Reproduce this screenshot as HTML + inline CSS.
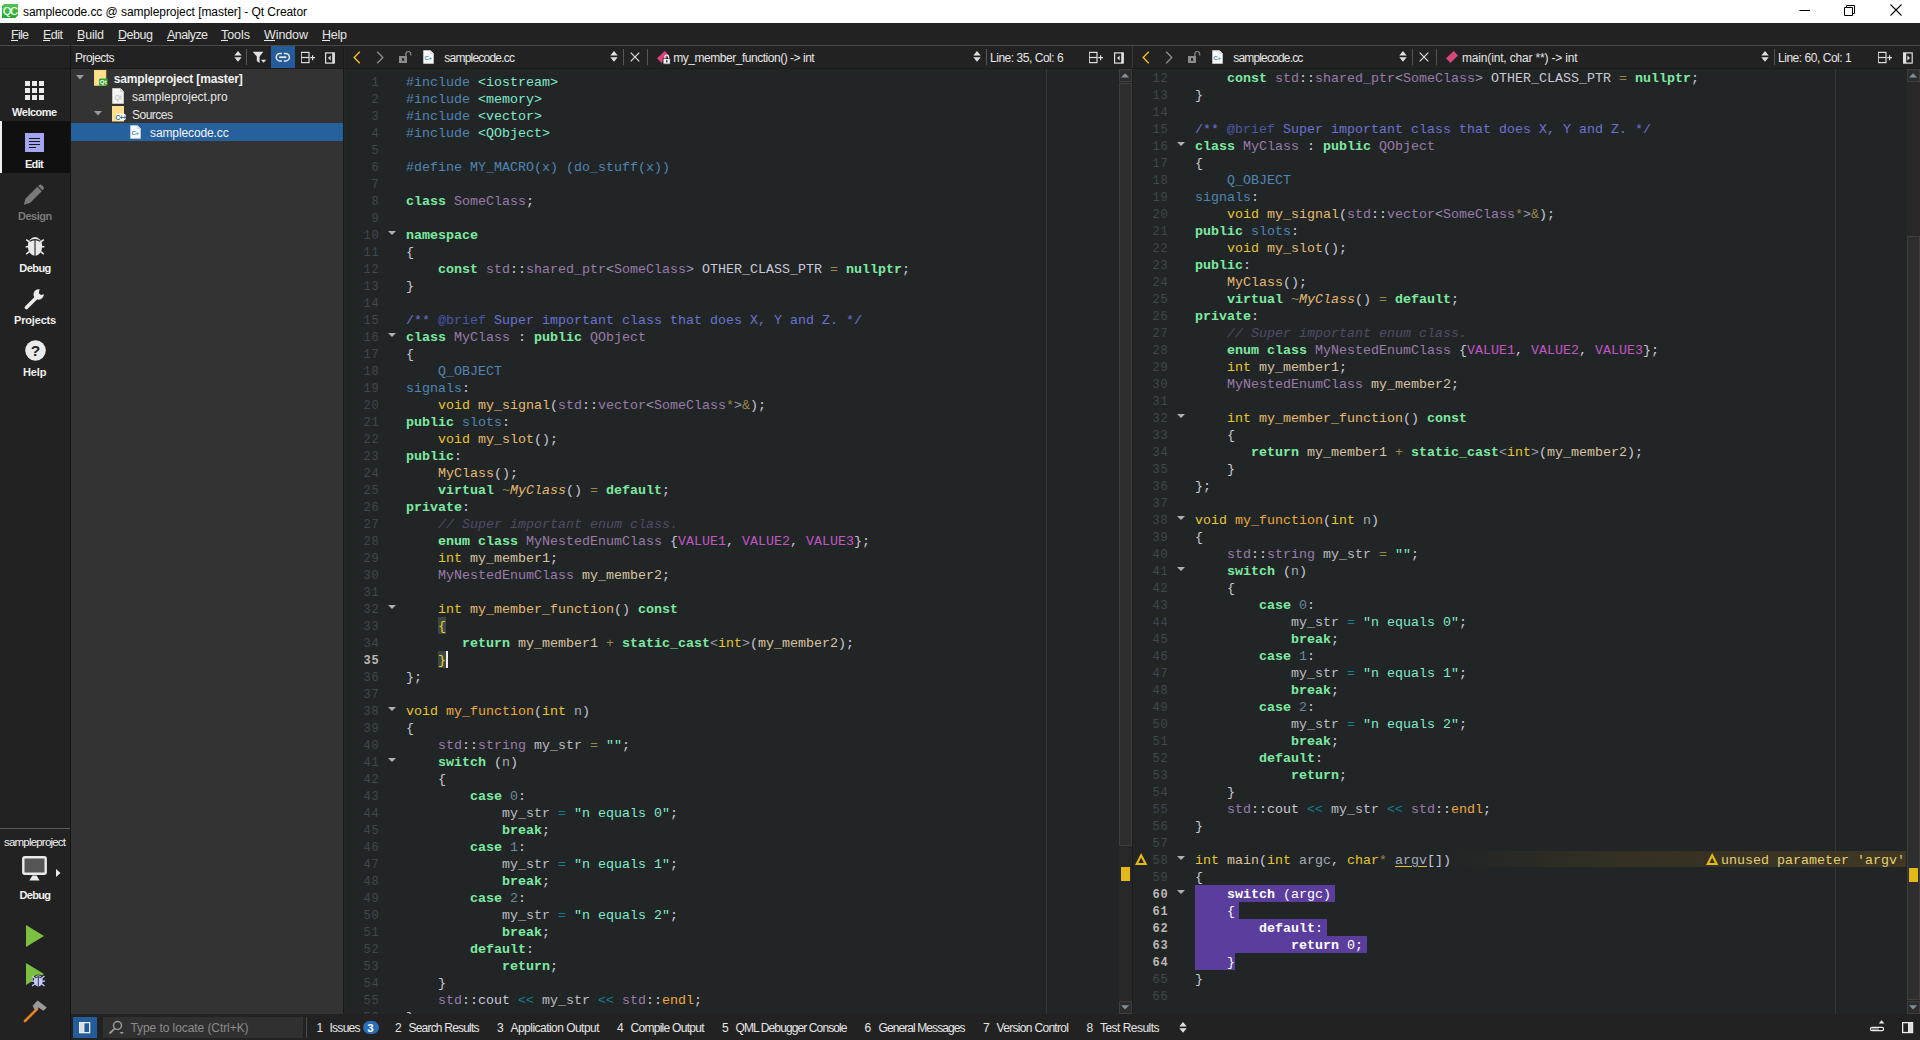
<!DOCTYPE html>
<html><head><meta charset="utf-8"><title>Qt Creator</title>
<style>
html,body{margin:0;padding:0;}
body{width:1920px;height:1040px;overflow:hidden;background:#222526;position:relative;font-family:"Liberation Sans",sans-serif;}
.b{position:absolute;display:block;}
.t{position:absolute;white-space:pre;line-height:16px;height:16px;font-family:"Liberation Sans",sans-serif;}
.ed{position:absolute;overflow:hidden;background:#222526;}
.ln{position:absolute;left:0;height:17px;line-height:17px;white-space:pre;font-family:"Liberation Mono",monospace;font-size:13.333px;color:#c9c9d9;}
.ln i.n{position:absolute;left:0;width:34.6px;top:2px;font-size:12px;letter-spacing:0.8px;text-align:right;font-style:normal;color:#3f484f;}
.ln i.n.cur{color:#bcb8b4;font-weight:bold;}
.ln b.cd{position:absolute;left:61px;top:1px;font-weight:normal;}
.fold{position:absolute;left:42.6px;top:5px;width:0;height:0;border-left:4px solid transparent;border-right:4px solid transparent;border-top:4.7px solid #b0b0b0;}

.p{color:#5086b4}.s{color:#80eacc}.k{color:#7deaa2;font-weight:bold}.ty{color:#9b7bab}
.y{color:#e6c52f}.o{color:#9a8848}.ab{color:#9c9cb0}.lv{color:#babec5}.c{color:#6b72d2}.ct{color:#4b56a6}
.lc{color:#4d4d66;font-style:italic}.e{color:#c257c4}.f{color:#e6ba72}.gf{color:#eda93a}
.m{color:#d9c3a2}.nu{color:#6888a0}.ov{color:#11808f}.pa{color:#a3acb8}.vf{color:#e6ba72;font-style:italic}
.mp{color:#e6d822}
.sel{color:#fff}.sel *{color:#fff !important}
.wu{color:#a3acbc;text-decoration:underline;text-decoration-color:#e0c030;text-underline-offset:2px}

</style></head><body>
<div class="b" style="left:0px;top:0px;width:1920px;height:23px;background:#ffffff;"></div>
<svg class="b" style="left:2px;top:4px;" width="17" height="15" viewBox="0 0 17 15"><defs><linearGradient id="qcg" x1="0" y1="0" x2="0" y2="1"><stop offset="0" stop-color="#52c658"/><stop offset="1" stop-color="#1fa62a"/></linearGradient></defs><path d="M2 0H16V11.4L13.2 14H0V2Z" fill="url(#qcg)"/><text x="8.1" y="11" font-family="Liberation Sans" font-size="10.5" fill="#f4fff4" text-anchor="middle" letter-spacing="-0.7" stroke="#f4fff4" stroke-width="0.25">QC</text></svg>
<span class="t" style="left:23px;top:4px;font-size:12px;color:#000;letter-spacing:-0.059px;">samplecode.cc @ sampleproject [master] - Qt Creator</span>
<svg class="b" style="left:1798.5px;top:4px;" width="12" height="12" viewBox="0 0 12 12"><path d="M0.5 6.5H11" stroke="#000" stroke-width="1"/></svg>
<svg class="b" style="left:1843px;top:3.5px;" width="13" height="13" viewBox="0 0 13 13"><path d="M1.5 3.5H9.5V11.5H1.5Z M3.5 3.5V1.5H11.5V9.5H9.5" fill="none" stroke="#000" stroke-width="1"/></svg>
<svg class="b" style="left:1889.5px;top:4.2px;" width="12" height="12" viewBox="0 0 12 12"><path d="M0.5 0.5L11.5 11.5M11.5 0.5L0.5 11.5" stroke="#000" stroke-width="1.1"/></svg>
<div class="b" style="left:0px;top:23px;width:1920px;height:22px;background:#222222;"></div>
<div class="b" style="left:0px;top:45px;width:1920px;height:1px;background:#4a4a4a;"></div>
<div class="b" style="left:70px;top:45px;width:1px;height:1px;background:#222222;"></div>
<span class="t" style="left:11px;top:27px;font-size:12.5px;color:#e6e6e6;letter-spacing:-0.714px;">File</span>
<div class="b" style="left:11px;top:40px;width:6.63477px;height:1px;background:#e6e6e6;"></div>
<span class="t" style="left:43px;top:27px;font-size:12.5px;color:#e6e6e6;letter-spacing:-0.513px;">Edit</span>
<div class="b" style="left:43px;top:40px;width:7.33789px;height:1px;background:#e6e6e6;"></div>
<span class="t" style="left:77px;top:27px;font-size:12.5px;color:#e6e6e6;letter-spacing:-0.199px;">Build</span>
<div class="b" style="left:77px;top:40px;width:7.33789px;height:1px;background:#e6e6e6;"></div>
<span class="t" style="left:118px;top:27px;font-size:12.5px;color:#e6e6e6;letter-spacing:-0.458px;">Debug</span>
<div class="b" style="left:118px;top:40px;width:8.02734px;height:1px;background:#e6e6e6;"></div>
<span class="t" style="left:167px;top:27px;font-size:12.5px;color:#e6e6e6;letter-spacing:-0.578px;">Analyze</span>
<div class="b" style="left:167px;top:40px;width:7.33789px;height:1px;background:#e6e6e6;"></div>
<span class="t" style="left:221px;top:27px;font-size:12.5px;color:#e6e6e6;letter-spacing:-0.045px;">Tools</span>
<div class="b" style="left:221px;top:40px;width:6.63477px;height:1px;background:#e6e6e6;"></div>
<span class="t" style="left:264px;top:27px;font-size:12.5px;color:#e6e6e6;letter-spacing:-0.091px;">Window</span>
<div class="b" style="left:264px;top:40px;width:10.7988px;height:1px;background:#e6e6e6;"></div>
<span class="t" style="left:322px;top:27px;font-size:12.5px;color:#e6e6e6;letter-spacing:-0.236px;">Help</span>
<div class="b" style="left:322px;top:40px;width:8.02734px;height:1px;background:#e6e6e6;"></div>
<div class="b" style="left:0px;top:46px;width:1920px;height:23px;background:#222222;"></div>
<div class="b" style="left:0px;top:46px;width:70px;height:22px;background:#222222;"></div>
<div class="b" style="left:0px;top:68px;width:1920px;height:1px;background:#1b1b1b;"></div>
<div class="b" style="left:70px;top:46px;width:1px;height:994px;background:#141414;"></div>
<div class="b" style="left:0px;top:69px;width:70px;height:971px;background:#222222;"></div>
<div class="b" style="left:0px;top:121px;width:70px;height:52px;background:#101010;"></div>
<div class="b" style="left:0px;top:121px;width:2px;height:52px;background:#f0f0f0;"></div>
<span class="t" style="left:12.1px;top:104px;font-size:11px;color:#f0f0f0;font-weight:bold;letter-spacing:-0.499px;">Welcome</span>
<span class="t" style="left:24.9px;top:156px;font-size:11px;color:#f0f0f0;font-weight:bold;letter-spacing:-0.626px;">Edit</span>
<span class="t" style="left:18px;top:208px;font-size:11px;color:#7a7a7a;font-weight:bold;letter-spacing:-0.474px;">Design</span>
<span class="t" style="left:19.3px;top:260px;font-size:11px;color:#f0f0f0;font-weight:bold;letter-spacing:-0.554px;">Debug</span>
<span class="t" style="left:14px;top:312px;font-size:11px;color:#f0f0f0;font-weight:bold;letter-spacing:-0.173px;">Projects</span>
<span class="t" style="left:22.9px;top:364px;font-size:11px;color:#f0f0f0;font-weight:bold;letter-spacing:-0.112px;">Help</span>
<svg class="b" style="left:24.7px;top:81.3px;" width="19" height="19" viewBox="0 0 19 19"><rect x="0" y="0" width="5" height="5" fill="#eaeaea"/><rect x="7" y="0" width="5" height="5" fill="#eaeaea"/><rect x="14" y="0" width="5" height="5" fill="#eaeaea"/><rect x="0" y="7" width="5" height="5" fill="#eaeaea"/><rect x="7" y="7" width="5" height="5" fill="#eaeaea"/><rect x="14" y="7" width="5" height="5" fill="#eaeaea"/><rect x="0" y="14" width="5" height="5" fill="#eaeaea"/><rect x="7" y="14" width="5" height="5" fill="#eaeaea"/><rect x="14" y="14" width="5" height="5" fill="#eaeaea"/></svg>
<svg class="b" style="left:25px;top:132.6px;" width="20" height="20" viewBox="0 0 20 20"><rect x="0" y="0" width="19" height="19" fill="#a3a5f0"/><path d="M4 5.5H15M4 8.5H15M4 11.5H15M4 14.5H11" stroke="#15151a" stroke-width="1"/></svg>
<svg class="b" style="left:23px;top:184px;" width="24" height="24" viewBox="0 0 24 24"><path d="M0.8 20.8L2.6 14.6L14.4 2.8L18.8 7.2L7 19Z" fill="#7a7a7a"/><path d="M15.2 2L17 0.6Q17.8 0.2 18.6 1L20.6 3Q21.4 3.8 20.8 4.6L19.6 6.4Z" fill="#7a7a7a"/></svg>
<svg class="b" style="left:24px;top:235px;" width="22" height="22" viewBox="0 0 22 22"><ellipse cx="11" cy="11.3" rx="7.2" ry="9.4" fill="#eaeaea"/><path d="M11 4.6V21" stroke="#212121" stroke-width="1.1"/><path d="M5.2 6.6Q11 2.6 16.8 6.6" fill="none" stroke="#212121" stroke-width="1.1"/><path d="M2.2 4.6L5.6 7.2M19.8 4.6L16.4 7.2M1.6 11.8H4.6M20.4 11.8H17.4M2.2 19.2L5.6 16.4M19.8 19.2L16.4 16.4" stroke="#eaeaea" stroke-width="1.5"/></svg>
<svg class="b" style="left:24px;top:288px;" width="22" height="22" viewBox="0 0 22 22"><path d="M2.5 19.5L12 10" stroke="#eaeaea" stroke-width="3.6" stroke-linecap="round"/><path d="M19.8 5.2A5.2 5.2 0 1 1 14.6 1.3L14.6 5.2L17.2 6.5Z" fill="#eaeaea" transform="rotate(12 15 6)"/></svg>
<svg class="b" style="left:24.5px;top:340px;" width="21" height="21" viewBox="0 0 21 21"><circle cx="10.5" cy="10.5" r="10.3" fill="#eaeaea"/><text x="10.5" y="16" text-anchor="middle" font-family="Liberation Sans" font-weight="bold" font-size="15.5" fill="#212121">?</text></svg>
<div class="b" style="left:0px;top:828px;width:70px;height:1px;background:#5a5a5a;"></div>
<span class="t" style="left:4px;top:833.5px;font-size:11.5px;color:#f0f0f0;letter-spacing:-0.799px;">sampleproject</span>
<svg class="b" style="left:22.3px;top:855.7px;" width="27" height="26" viewBox="0 0 27 26"><rect x="1.3" y="1.3" width="22.4" height="16.4" rx="1.5" fill="#555" stroke="#eaeaea" stroke-width="2.4"/><path d="M7.4 24.6L10.4 19.5H14.6L17.6 24.6Z" fill="#eaeaea"/></svg>
<svg class="b" style="left:56px;top:868px;" width="5" height="10" viewBox="0 0 5 10"><path d="M0 1L4.5 5L0 9Z" fill="#eaeaea"/></svg>
<span class="t" style="left:19.4px;top:886.5px;font-size:11px;color:#f0f0f0;font-weight:bold;letter-spacing:-0.654px;">Debug</span>
<svg class="b" style="left:25px;top:924px;" width="20" height="24" viewBox="0 0 20 24"><path d="M1 1L19 12L1 23Z" fill="#7bc043"/></svg>
<svg class="b" style="left:25px;top:962px;" width="22" height="25" viewBox="0 0 22 25"><path d="M1 1L19 12L1 23Z" fill="#7bc043"/><g transform="translate(6.3,11.3)"><ellipse cx="7" cy="7.6" rx="5.6" ry="6.5" fill="#212121"/><ellipse cx="7" cy="7.6" rx="4.5" ry="5.6" fill="#c5ccff"/><path d="M7 3.6V13" stroke="#212121" stroke-width="0.9"/><path d="M3.6 4.6Q7 2.2 10.4 4.6" fill="none" stroke="#212121" stroke-width="0.9"/><path d="M0.8 2.8L3.4 5M13.2 2.8L10.6 5M0.2 7.8H2.8M13.8 7.8H11.2M0.8 12.8L3.4 10.6M13.2 12.8L10.6 10.6" stroke="#c5ccff" stroke-width="1.3"/></g></svg>
<svg class="b" style="left:22px;top:1000px;" width="26" height="24" viewBox="0 0 26 24"><path d="M3 21L15 9" stroke="#e8821e" stroke-width="2.6" stroke-linecap="round"/><path d="M10.6 5.8L15.6 0.6L24.8 7.4L21.4 10.8L16.4 7.4L13.2 10.6Z" fill="#9a9a9a"/></svg>
<div class="b" style="left:71px;top:69px;width:272px;height:946px;background:#333333;"></div>
<div class="b" style="left:343px;top:46px;width:1px;height:969px;background:#1a1a1a;"></div>
<div class="b" style="left:344px;top:46px;width:1px;height:969px;background:#262626;"></div>
<span class="t" style="left:75px;top:50px;font-size:12px;color:#e6e6e6;letter-spacing:-0.550px;">Projects</span>
<svg class="b" style="left:233.5px;top:50.1px;" width="8" height="14" viewBox="0 0 8 14"><path d="M0.3 5.4L4 1L7.7 5.4Z M0.3 7.3L4 11.8L7.7 7.3Z" fill="#e0e0e0"/></svg>
<div class="b" style="left:246px;top:49px;width:1px;height:16px;background:#555;"></div>
<svg class="b" style="left:252px;top:51px;" width="16" height="14" viewBox="0 0 16 14"><path d="M0.8 0.8H11.3L7.6 5.6V12L4.8 10V5.6Z" fill="#e0e0e0"/><path d="M9 8.8H14.2L11.6 11.7Z" fill="#e0e0e0"/></svg>
<div class="b" style="left:271px;top:46px;width:24px;height:22px;background:#235c99;"></div>
<svg class="b" style="left:275px;top:51px;" width="16" height="12" viewBox="0 0 16 12"><path d="M6.9 2.5H5A3.7 3.7 0 0 0 5 9.9H6.9 M8.8 2.5H10.7A3.7 3.7 0 0 1 10.7 9.9H8.8" fill="none" stroke="#e8e8e8" stroke-width="1.5"/><path d="M4.2 6.2H11.4" stroke="#f0e8e4" stroke-width="1.8"/></svg>
<svg class="b" style="left:301px;top:51px;" width="16" height="13" viewBox="0 0 16 13"><rect x="0.2" y="1.4" width="7.8" height="10.2" fill="none" stroke="#e0e0e0" stroke-width="1.2"/><path d="M0.2 6.5H8" stroke="#e0e0e0" stroke-width="1.2"/><path d="M9.2 6.7H14M11.6 4.2V9.2" stroke="#e0e0e0" stroke-width="1.2"/></svg>
<svg class="b" style="left:324.5px;top:51.5px;" width="10" height="12" viewBox="0 0 10 12"><rect x="0.6" y="0.9" width="8.6" height="10.2" fill="none" stroke="#e0e0e0" stroke-width="1.2"/><rect x="7.2" y="0.9" width="2.4" height="10.2" fill="#e0e0e0"/><path d="M5.6 3.6V8.4L3 6Z" fill="#e0e0e0"/></svg>
<div class="b" style="left:71px;top:123px;width:272px;height:18px;background:#26609d;"></div>
<svg class="b" style="left:76px;top:75px;" width="8" height="5" viewBox="0 0 8 5"><path d="M0 0H8L4 4.5Z" fill="#9a9a9a"/></svg>
<svg class="b" style="left:94px;top:111px;" width="8" height="5" viewBox="0 0 8 5"><path d="M0 0H8L4 4.5Z" fill="#9a9a9a"/></svg>
<svg class="b" style="left:94px;top:70px;" width="14" height="16" viewBox="0 0 14 16"><rect x="0" y="0" width="12" height="15.5" fill="#fde08c"/><rect x="0" y="0" width="12" height="15.5" fill="none" stroke="#e8c860" stroke-width="0.6"/><rect x="5" y="8.5" width="8.6" height="7" rx="0.8" fill="#2fa52f"/><text x="9.3" y="14.2" font-family="Liberation Sans" font-weight="bold" font-size="6.2" fill="#fff" text-anchor="middle">Qt</text></svg>
<span class="t" style="left:113.7px;top:71px;font-size:12px;color:#f2f2f2;font-weight:bold;letter-spacing:-0.145px;">sampleproject [master]</span>
<svg class="b" style="left:112px;top:88px;" width="13" height="16" viewBox="0 0 13 16"><path d="M0.5 0.5H8.5L11.5 3.5V15.5H0.5Z" fill="#f4f4f4" stroke="#cfcfcf" stroke-width="0.8"/><path d="M8.5 0.5V3.5H11.5" fill="#dcdcdc" stroke="#bdbdbd" stroke-width="0.6"/><text x="6.3" y="11.5" font-family="Liberation Sans" font-size="6.5" fill="#b0b0b0" text-anchor="middle">Qt</text></svg>
<span class="t" style="left:132px;top:89px;font-size:12px;color:#e6e6e6;letter-spacing:0.020px;">sampleproject.pro</span>
<svg class="b" style="left:112px;top:106px;" width="14" height="16" viewBox="0 0 14 16"><rect x="0" y="0" width="12" height="15.5" fill="#fde08c"/><rect x="3.6" y="7.6" width="10.4" height="6.8" rx="3" fill="#fffdf4"/><text x="8.7" y="13.8" font-family="Liberation Sans" font-weight="bold" font-size="7" fill="#3c6fa5" text-anchor="middle" letter-spacing="-0.7">C++</text></svg>
<span class="t" style="left:132px;top:107px;font-size:12px;color:#e6e6e6;letter-spacing:-0.504px;">Sources</span>
<svg class="b" style="left:130.3px;top:125px;" width="11" height="14" viewBox="0 0 11 14"><path d="M0.5 0.5H7.5L10.5 3.5V13.5H0.5Z" fill="#f8f8f8" stroke="#d8d8d8" stroke-width="0.6"/><path d="M7.5 0.5V3.5H10.5" fill="#d8e0e8" stroke="#c0c8d0" stroke-width="0.5"/><text x="5" y="10.3" font-family="Liberation Sans" font-weight="bold" font-size="6" fill="#3c8fb8" text-anchor="middle" letter-spacing="-0.5">C+</text></svg>
<span class="t" style="left:150px;top:125px;font-size:12px;color:#f4f4f4;letter-spacing:-0.112px;">samplecode.cc</span>
<div class="ed" style="left:345px;top:69px;width:774px;height:945px;">
<div class="ln" style="top:4px"><i class="n">1</i><b class="cd"><span class="p">#include</span> <span class="s">&lt;iostream&gt;</span></b></div>
<div class="ln" style="top:21px"><i class="n">2</i><b class="cd"><span class="p">#include</span> <span class="s">&lt;memory&gt;</span></b></div>
<div class="ln" style="top:38px"><i class="n">3</i><b class="cd"><span class="p">#include</span> <span class="s">&lt;vector&gt;</span></b></div>
<div class="ln" style="top:55px"><i class="n">4</i><b class="cd"><span class="p">#include</span> <span class="s">&lt;QObject&gt;</span></b></div>
<div class="ln" style="top:72px"><i class="n">5</i><b class="cd"></b></div>
<div class="ln" style="top:89px"><i class="n">6</i><b class="cd"><span class="p">#define MY_MACRO(x) (do_stuff(x))</span></b></div>
<div class="ln" style="top:106px"><i class="n">7</i><b class="cd"></b></div>
<div class="ln" style="top:123px"><i class="n">8</i><b class="cd"><span class="k">class</span> <span class="ty">SomeClass</span>;</b></div>
<div class="ln" style="top:140px"><i class="n">9</i><b class="cd"></b></div>
<div class="ln" style="top:157px"><i class="n">10</i><u class="fold"></u><b class="cd"><span class="k">namespace</span></b></div>
<div class="ln" style="top:174px"><i class="n">11</i><b class="cd">{</b></div>
<div class="ln" style="top:191px"><i class="n">12</i><b class="cd">    <span class="k">const</span> <span class="ty">std</span>::<span class="ty">shared_ptr</span><span class="ab">&lt;</span><span class="ty">SomeClass</span><span class="ab">&gt;</span> OTHER_CLASS_PTR <span class="o">=</span> <span class="k">nullptr</span>;</b></div>
<div class="ln" style="top:208px"><i class="n">13</i><b class="cd">}</b></div>
<div class="ln" style="top:225px"><i class="n">14</i><b class="cd"></b></div>
<div class="ln" style="top:242px"><i class="n">15</i><b class="cd"><span class="c">/** </span><span class="ct">@brief</span><span class="c"> Super important class that does X, Y and Z. */</span></b></div>
<div class="ln" style="top:259px"><i class="n">16</i><u class="fold"></u><b class="cd"><span class="k">class</span> <span class="ty">MyClass</span> : <span class="k">public</span> <span class="ty">QObject</span></b></div>
<div class="ln" style="top:276px"><i class="n">17</i><b class="cd">{</b></div>
<div class="ln" style="top:293px"><i class="n">18</i><b class="cd">    <span class="p">Q_OBJECT</span></b></div>
<div class="ln" style="top:310px"><i class="n">19</i><b class="cd"><span class="p">signals</span>:</b></div>
<div class="ln" style="top:327px"><i class="n">20</i><b class="cd">    <span class="y">void</span> <span class="f">my_signal</span>(<span class="ty">std</span>::<span class="ty">vector</span><span class="ab">&lt;</span><span class="ty">SomeClass</span><span class="o">*</span><span class="ab">&gt;</span><span class="o">&amp;</span>);</b></div>
<div class="ln" style="top:344px"><i class="n">21</i><b class="cd"><span class="k">public</span> <span class="p">slots</span>:</b></div>
<div class="ln" style="top:361px"><i class="n">22</i><b class="cd">    <span class="y">void</span> <span class="f">my_slot</span>();</b></div>
<div class="ln" style="top:378px"><i class="n">23</i><b class="cd"><span class="k">public</span>:</b></div>
<div class="ln" style="top:395px"><i class="n">24</i><b class="cd">    <span class="f">MyClass</span>();</b></div>
<div class="ln" style="top:412px"><i class="n">25</i><b class="cd">    <span class="k">virtual</span> <span class="o">~</span><span class="vf">MyClass</span>() <span class="o">=</span> <span class="k">default</span>;</b></div>
<div class="ln" style="top:429px"><i class="n">26</i><b class="cd"><span class="k">private</span>:</b></div>
<div class="ln" style="top:446px"><i class="n">27</i><b class="cd">    <span class="lc">// Super important enum class.</span></b></div>
<div class="ln" style="top:463px"><i class="n">28</i><b class="cd">    <span class="k">enum</span> <span class="k">class</span> <span class="ty">MyNestedEnumClass</span> {<span class="e">VALUE1</span>, <span class="e">VALUE2</span>, <span class="e">VALUE3</span>};</b></div>
<div class="ln" style="top:480px"><i class="n">29</i><b class="cd">    <span class="y">int</span> <span class="m">my_member1</span>;</b></div>
<div class="ln" style="top:497px"><i class="n">30</i><b class="cd">    <span class="ty">MyNestedEnumClass</span> <span class="m">my_member2</span>;</b></div>
<div class="ln" style="top:514px"><i class="n">31</i><b class="cd"></b></div>
<div class="ln" style="top:531px"><i class="n">32</i><u class="fold"></u><b class="cd">    <span class="y">int</span> <span class="f">my_member_function</span>() <span class="k">const</span></b></div>
<div class="b" style="left:93px;top:548px;width:8px;height:17px;background:#414546"></div>
<div class="ln" style="top:548px"><i class="n">33</i><b class="cd">    <span class="mp">{</span></b></div>
<div class="ln" style="top:565px"><i class="n">34</i><b class="cd">       <span class="k">return</span> <span class="m">my_member1</span> <span class="o">+</span> <span class="k">static_cast</span><span class="ab">&lt;</span><span class="y">int</span><span class="ab">&gt;</span>(<span class="m">my_member2</span>);</b></div>
<div class="b" style="left:93px;top:582px;width:8px;height:17px;background:#414546"></div>
<div class="ln" style="top:582px"><i class="n cur">35</i><b class="cd">    <span class="mp">}</span></b></div>
<div class="ln" style="top:599px"><i class="n">36</i><b class="cd">};</b></div>
<div class="ln" style="top:616px"><i class="n">37</i><b class="cd"></b></div>
<div class="ln" style="top:633px"><i class="n">38</i><u class="fold"></u><b class="cd"><span class="y">void</span> <span class="gf">my_function</span>(<span class="y">int</span> <span class="pa">n</span>)</b></div>
<div class="ln" style="top:650px"><i class="n">39</i><b class="cd">{</b></div>
<div class="ln" style="top:667px"><i class="n">40</i><b class="cd">    <span class="ty">std</span>::<span class="ty">string</span> <span class="lv">my_str</span> <span class="o">=</span> <span class="s">&quot;&quot;</span>;</b></div>
<div class="ln" style="top:684px"><i class="n">41</i><u class="fold"></u><b class="cd">    <span class="k">switch</span> (<span class="pa">n</span>)</b></div>
<div class="ln" style="top:701px"><i class="n">42</i><b class="cd">    {</b></div>
<div class="ln" style="top:718px"><i class="n">43</i><b class="cd">        <span class="k">case</span> <span class="nu">0</span>:</b></div>
<div class="ln" style="top:735px"><i class="n">44</i><b class="cd">            <span class="lv">my_str</span> <span class="ov">=</span> <span class="s">&quot;n equals 0&quot;</span>;</b></div>
<div class="ln" style="top:752px"><i class="n">45</i><b class="cd">            <span class="k">break</span>;</b></div>
<div class="ln" style="top:769px"><i class="n">46</i><b class="cd">        <span class="k">case</span> <span class="nu">1</span>:</b></div>
<div class="ln" style="top:786px"><i class="n">47</i><b class="cd">            <span class="lv">my_str</span> <span class="ov">=</span> <span class="s">&quot;n equals 1&quot;</span>;</b></div>
<div class="ln" style="top:803px"><i class="n">48</i><b class="cd">            <span class="k">break</span>;</b></div>
<div class="ln" style="top:820px"><i class="n">49</i><b class="cd">        <span class="k">case</span> <span class="nu">2</span>:</b></div>
<div class="ln" style="top:837px"><i class="n">50</i><b class="cd">            <span class="lv">my_str</span> <span class="ov">=</span> <span class="s">&quot;n equals 2&quot;</span>;</b></div>
<div class="ln" style="top:854px"><i class="n">51</i><b class="cd">            <span class="k">break</span>;</b></div>
<div class="ln" style="top:871px"><i class="n">52</i><b class="cd">        <span class="k">default</span>:</b></div>
<div class="ln" style="top:888px"><i class="n">53</i><b class="cd">            <span class="k">return</span>;</b></div>
<div class="ln" style="top:905px"><i class="n">54</i><b class="cd">    }</b></div>
<div class="ln" style="top:922px"><i class="n">55</i><b class="cd">    <span class="ty">std</span>::cout <span class="ov">&lt;&lt;</span> <span class="lv">my_str</span> <span class="ov">&lt;&lt;</span> <span class="ty">std</span>::<span class="gf">endl</span>;</b></div>
<div class="ln" style="top:939px"><i class="n">56</i><b class="cd">}</b></div>
</div>
<div class="b" style="left:446px;top:651px;width:2px;height:17px;background:#f0f0f0;"></div>
<div class="b" style="left:1046px;top:69px;width:1px;height:945px;background:#353839;"></div>
<div class="ed" style="left:1134px;top:69px;width:773px;height:945px;">
<div class="ln" style="top:0px"><i class="n">12</i><b class="cd">    <span class="k">const</span> <span class="ty">std</span>::<span class="ty">shared_ptr</span><span class="ab">&lt;</span><span class="ty">SomeClass</span><span class="ab">&gt;</span> OTHER_CLASS_PTR <span class="o">=</span> <span class="k">nullptr</span>;</b></div>
<div class="ln" style="top:17px"><i class="n">13</i><b class="cd">}</b></div>
<div class="ln" style="top:34px"><i class="n">14</i><b class="cd"></b></div>
<div class="ln" style="top:51px"><i class="n">15</i><b class="cd"><span class="c">/** </span><span class="ct">@brief</span><span class="c"> Super important class that does X, Y and Z. */</span></b></div>
<div class="ln" style="top:68px"><i class="n">16</i><u class="fold"></u><b class="cd"><span class="k">class</span> <span class="ty">MyClass</span> : <span class="k">public</span> <span class="ty">QObject</span></b></div>
<div class="ln" style="top:85px"><i class="n">17</i><b class="cd">{</b></div>
<div class="ln" style="top:102px"><i class="n">18</i><b class="cd">    <span class="p">Q_OBJECT</span></b></div>
<div class="ln" style="top:119px"><i class="n">19</i><b class="cd"><span class="p">signals</span>:</b></div>
<div class="ln" style="top:136px"><i class="n">20</i><b class="cd">    <span class="y">void</span> <span class="f">my_signal</span>(<span class="ty">std</span>::<span class="ty">vector</span><span class="ab">&lt;</span><span class="ty">SomeClass</span><span class="o">*</span><span class="ab">&gt;</span><span class="o">&amp;</span>);</b></div>
<div class="ln" style="top:153px"><i class="n">21</i><b class="cd"><span class="k">public</span> <span class="p">slots</span>:</b></div>
<div class="ln" style="top:170px"><i class="n">22</i><b class="cd">    <span class="y">void</span> <span class="f">my_slot</span>();</b></div>
<div class="ln" style="top:187px"><i class="n">23</i><b class="cd"><span class="k">public</span>:</b></div>
<div class="ln" style="top:204px"><i class="n">24</i><b class="cd">    <span class="f">MyClass</span>();</b></div>
<div class="ln" style="top:221px"><i class="n">25</i><b class="cd">    <span class="k">virtual</span> <span class="o">~</span><span class="vf">MyClass</span>() <span class="o">=</span> <span class="k">default</span>;</b></div>
<div class="ln" style="top:238px"><i class="n">26</i><b class="cd"><span class="k">private</span>:</b></div>
<div class="ln" style="top:255px"><i class="n">27</i><b class="cd">    <span class="lc">// Super important enum class.</span></b></div>
<div class="ln" style="top:272px"><i class="n">28</i><b class="cd">    <span class="k">enum</span> <span class="k">class</span> <span class="ty">MyNestedEnumClass</span> {<span class="e">VALUE1</span>, <span class="e">VALUE2</span>, <span class="e">VALUE3</span>};</b></div>
<div class="ln" style="top:289px"><i class="n">29</i><b class="cd">    <span class="y">int</span> <span class="m">my_member1</span>;</b></div>
<div class="ln" style="top:306px"><i class="n">30</i><b class="cd">    <span class="ty">MyNestedEnumClass</span> <span class="m">my_member2</span>;</b></div>
<div class="ln" style="top:323px"><i class="n">31</i><b class="cd"></b></div>
<div class="ln" style="top:340px"><i class="n">32</i><u class="fold"></u><b class="cd">    <span class="y">int</span> <span class="f">my_member_function</span>() <span class="k">const</span></b></div>
<div class="ln" style="top:357px"><i class="n">33</i><b class="cd">    {</b></div>
<div class="ln" style="top:374px"><i class="n">34</i><b class="cd">       <span class="k">return</span> <span class="m">my_member1</span> <span class="o">+</span> <span class="k">static_cast</span><span class="ab">&lt;</span><span class="y">int</span><span class="ab">&gt;</span>(<span class="m">my_member2</span>);</b></div>
<div class="ln" style="top:391px"><i class="n">35</i><b class="cd">    }</b></div>
<div class="ln" style="top:408px"><i class="n">36</i><b class="cd">};</b></div>
<div class="ln" style="top:425px"><i class="n">37</i><b class="cd"></b></div>
<div class="ln" style="top:442px"><i class="n">38</i><u class="fold"></u><b class="cd"><span class="y">void</span> <span class="gf">my_function</span>(<span class="y">int</span> <span class="pa">n</span>)</b></div>
<div class="ln" style="top:459px"><i class="n">39</i><b class="cd">{</b></div>
<div class="ln" style="top:476px"><i class="n">40</i><b class="cd">    <span class="ty">std</span>::<span class="ty">string</span> <span class="lv">my_str</span> <span class="o">=</span> <span class="s">&quot;&quot;</span>;</b></div>
<div class="ln" style="top:493px"><i class="n">41</i><u class="fold"></u><b class="cd">    <span class="k">switch</span> (<span class="pa">n</span>)</b></div>
<div class="ln" style="top:510px"><i class="n">42</i><b class="cd">    {</b></div>
<div class="ln" style="top:527px"><i class="n">43</i><b class="cd">        <span class="k">case</span> <span class="nu">0</span>:</b></div>
<div class="ln" style="top:544px"><i class="n">44</i><b class="cd">            <span class="lv">my_str</span> <span class="ov">=</span> <span class="s">&quot;n equals 0&quot;</span>;</b></div>
<div class="ln" style="top:561px"><i class="n">45</i><b class="cd">            <span class="k">break</span>;</b></div>
<div class="ln" style="top:578px"><i class="n">46</i><b class="cd">        <span class="k">case</span> <span class="nu">1</span>:</b></div>
<div class="ln" style="top:595px"><i class="n">47</i><b class="cd">            <span class="lv">my_str</span> <span class="ov">=</span> <span class="s">&quot;n equals 1&quot;</span>;</b></div>
<div class="ln" style="top:612px"><i class="n">48</i><b class="cd">            <span class="k">break</span>;</b></div>
<div class="ln" style="top:629px"><i class="n">49</i><b class="cd">        <span class="k">case</span> <span class="nu">2</span>:</b></div>
<div class="ln" style="top:646px"><i class="n">50</i><b class="cd">            <span class="lv">my_str</span> <span class="ov">=</span> <span class="s">&quot;n equals 2&quot;</span>;</b></div>
<div class="ln" style="top:663px"><i class="n">51</i><b class="cd">            <span class="k">break</span>;</b></div>
<div class="ln" style="top:680px"><i class="n">52</i><b class="cd">        <span class="k">default</span>:</b></div>
<div class="ln" style="top:697px"><i class="n">53</i><b class="cd">            <span class="k">return</span>;</b></div>
<div class="ln" style="top:714px"><i class="n">54</i><b class="cd">    }</b></div>
<div class="ln" style="top:731px"><i class="n">55</i><b class="cd">    <span class="ty">std</span>::cout <span class="ov">&lt;&lt;</span> <span class="lv">my_str</span> <span class="ov">&lt;&lt;</span> <span class="ty">std</span>::<span class="gf">endl</span>;</b></div>
<div class="ln" style="top:748px"><i class="n">56</i><b class="cd">}</b></div>
<div class="ln" style="top:765px"><i class="n">57</i><b class="cd"></b></div>
<div class="ln" style="top:782px"><i class="n">58</i><u class="fold"></u><b class="cd"><span class="y">int</span> <span class="m">main</span>(<span class="y">int</span> <span class="pa">argc</span>, <span class="y">char</span><span class="o">*</span> <span class="wu">argv</span>[])</b></div>
<div class="ln" style="top:799px"><i class="n">59</i><b class="cd">{</b></div>
<div class="b" style="left:61px;top:816px;width:140px;height:17px;background:#5a3d9c"></div>
<div class="ln" style="top:816px"><i class="n cur">60</i><u class="fold"></u><b class="cd"><span class="sel">    <span class="k">switch</span> (argc)</span></b></div>
<div class="b" style="left:61px;top:833px;width:44px;height:17px;background:#5a3d9c"></div>
<div class="ln" style="top:833px"><i class="n cur">61</i><b class="cd"><span class="sel">    {</span></b></div>
<div class="b" style="left:61px;top:850px;width:132px;height:17px;background:#5a3d9c"></div>
<div class="ln" style="top:850px"><i class="n cur">62</i><b class="cd"><span class="sel">        <span class="k">default</span>:</span></b></div>
<div class="b" style="left:61px;top:867px;width:172px;height:17px;background:#5a3d9c"></div>
<div class="ln" style="top:867px"><i class="n cur">63</i><b class="cd"><span class="sel">            <span class="k">return</span> 0;</span></b></div>
<div class="b" style="left:61px;top:884px;width:40px;height:17px;background:#5a3d9c"></div>
<div class="ln" style="top:884px"><i class="n cur">64</i><b class="cd"><span class="sel">    }</span></b></div>
<div class="ln" style="top:901px"><i class="n">65</i><b class="cd">}</b></div>
<div class="ln" style="top:918px"><i class="n">66</i><b class="cd"></b></div>
</div>
<div class="b" style="left:1835px;top:69px;width:1px;height:945px;background:#353839;"></div>
<div class="b" style="left:1450px;top:851px;width:456px;height:16px;background:linear-gradient(90deg,rgba(64,56,34,0) 0%,rgba(64,56,34,0.55) 35%,rgba(64,56,34,1) 100%);"></div>
<svg class="b" style="left:1705.8px;top:852.6px;" width="13" height="13" viewBox="0 0 13 13"><path d="M6.15 2.3L10.6 11H1.7Z" fill="none" stroke="#e8b914" stroke-width="2.1" stroke-linejoin="miter"/></svg>
<span class="b" style="left:1721px;top:852px;height:17px;line-height:17px;font-family:'Liberation Mono',monospace;font-size:13.333px;color:#e6cf73;white-space:pre;">unused parameter 'argv'</span>
<svg class="b" style="left:1134.8px;top:852.6px;" width="13" height="13" viewBox="0 0 13 13"><path d="M6.15 2.3L10.6 11H1.7Z" fill="none" stroke="#e8b914" stroke-width="2.1" stroke-linejoin="miter"/></svg>
<div class="b" style="left:1119px;top:69px;width:13px;height:945px;background:#282828;"></div>
<div class="b" style="left:1119px;top:69px;width:13px;height:13px;background:#2c2c2c;box-sizing:border-box;border:1px solid #3e3e3e;"></div>
<svg class="b" style="left:1121px;top:72.6px;" width="9" height="5" viewBox="0 0 9 5"><path d="M0 4.6L4.1 0.2L8.2 4.6Z" fill="#7a929e"/></svg>
<div class="b" style="left:1119px;top:1001px;width:13px;height:13px;background:#2c2c2c;box-sizing:border-box;border:1px solid #3e3e3e;"></div>
<svg class="b" style="left:1121px;top:1005.4px;" width="9" height="5" viewBox="0 0 9 5"><path d="M0 0.2L4.1 4.6L8.2 0.2Z" fill="#7a929e"/></svg>
<div class="b" style="left:1119px;top:83px;width:13px;height:763px;background:#2e2e2e;box-sizing:border-box;border:1px solid #3e3e3e;"></div>
<div class="b" style="left:1907px;top:69px;width:13px;height:945px;background:#282828;"></div>
<div class="b" style="left:1907px;top:69px;width:13px;height:13px;background:#2c2c2c;box-sizing:border-box;border:1px solid #3e3e3e;"></div>
<svg class="b" style="left:1909px;top:72.6px;" width="9" height="5" viewBox="0 0 9 5"><path d="M0 4.6L4.1 0.2L8.2 4.6Z" fill="#7a929e"/></svg>
<div class="b" style="left:1907px;top:1001px;width:13px;height:13px;background:#2c2c2c;box-sizing:border-box;border:1px solid #3e3e3e;"></div>
<svg class="b" style="left:1909px;top:1005.4px;" width="9" height="5" viewBox="0 0 9 5"><path d="M0 0.2L4.1 4.6L8.2 0.2Z" fill="#7a929e"/></svg>
<div class="b" style="left:1907px;top:236px;width:13px;height:764px;background:#2e2e2e;box-sizing:border-box;border:1px solid #3e3e3e;"></div>
<div class="b" style="left:1121px;top:867px;width:9px;height:14px;background:#e4b818;"></div>
<div class="b" style="left:1909px;top:868px;width:9px;height:14px;background:#e4b818;"></div>
<div class="b" style="left:1132px;top:46px;width:1px;height:22px;background:#3a3a3a;"></div>
<div class="b" style="left:1132px;top:69px;width:1px;height:945px;background:#1c1c1c;"></div>
<svg class="b" style="left:352.6px;top:50.5px;" width="8" height="13" viewBox="0 0 8 13"><path d="M6.8 0.8L1.2 6.5L6.8 12.2" fill="none" stroke="#f0c020" stroke-width="1.4"/></svg>
<svg class="b" style="left:375.6px;top:50.5px;" width="8" height="13" viewBox="0 0 8 13"><path d="M1.2 0.8L6.8 6.5L1.2 12.2" fill="none" stroke="#8a8a8a" stroke-width="1.4"/></svg>
<svg class="b" style="left:399px;top:50px;" width="13" height="14" viewBox="0 0 13 14"><rect x="0" y="6" width="8" height="7" fill="#8c8c8c"/><rect x="3" y="8.2" width="2.2" height="2.6" fill="#222"/><path d="M6.9 6V3.9A2.4 2.4 0 0 1 11.7 3.9V5.6" fill="none" stroke="#8c8c8c" stroke-width="1.2"/></svg>
<svg class="b" style="left:423px;top:50px;" width="11" height="14" viewBox="0 0 11 14"><path d="M0.5 0.5H7.5L10.5 3.5V13.5H0.5Z" fill="#f8f8f8" stroke="#d8d8d8" stroke-width="0.6"/><path d="M7.5 0.5V3.5H10.5" fill="#d8e0e8" stroke="#c0c8d0" stroke-width="0.5"/><text x="5" y="10.3" font-family="Liberation Sans" font-weight="bold" font-size="6" fill="#3c8fb8" text-anchor="middle" letter-spacing="-0.5">C+</text></svg>
<span class="t" style="left:444.3px;top:50px;font-size:12px;color:#e6e6e6;letter-spacing:-0.778px;">samplecode.cc</span>
<svg class="b" style="left:610.3px;top:50.1px;" width="8" height="14" viewBox="0 0 8 14"><path d="M0.3 5.4L4 1L7.7 5.4Z M0.3 7.3L4 11.8L7.7 7.3Z" fill="#e0e0e0"/></svg>
<div class="b" style="left:623px;top:49px;width:1px;height:16px;background:#555;"></div>
<svg class="b" style="left:630.2px;top:52px;" width="10" height="10" viewBox="0 0 10 10"><path d="M0.7 0.7L9.3 9.3M9.3 0.7L0.7 9.3" stroke="#e0e0e0" stroke-width="1.2"/></svg>
<div class="b" style="left:647px;top:49px;width:1px;height:16px;background:#555;"></div>
<span class="t" style="left:673.3px;top:50px;font-size:12px;color:#e6e6e6;letter-spacing:-0.474px;">my_member_function() -&gt; int</span>
<svg class="b" style="left:973.3px;top:50.1px;" width="8" height="14" viewBox="0 0 8 14"><path d="M0.3 5.4L4 1L7.7 5.4Z M0.3 7.3L4 11.8L7.7 7.3Z" fill="#e0e0e0"/></svg>
<div class="b" style="left:986px;top:49px;width:1px;height:16px;background:#555;"></div>
<span class="t" style="left:990px;top:50px;font-size:12px;color:#e6e6e6;letter-spacing:-0.468px;">Line: 35, Col: 6</span>
<svg class="b" style="left:1089px;top:51px;" width="16" height="13" viewBox="0 0 16 13"><rect x="0.2" y="1.4" width="7.8" height="10.2" fill="none" stroke="#e0e0e0" stroke-width="1.2"/><path d="M0.2 6.5H8" stroke="#e0e0e0" stroke-width="1.2"/><path d="M9.2 6.7H14M11.6 4.2V9.2" stroke="#e0e0e0" stroke-width="1.2"/></svg>
<svg class="b" style="left:1114px;top:51.5px;" width="10" height="12" viewBox="0 0 10 12"><rect x="0.6" y="0.9" width="8.6" height="10.2" fill="none" stroke="#e0e0e0" stroke-width="1.2"/><rect x="7.2" y="0.9" width="2.4" height="10.2" fill="#e0e0e0"/><path d="M5.6 3.6V8.4L3 6Z" fill="#e0e0e0"/></svg>
<svg class="b" style="left:656.9px;top:51px;" width="15" height="14" viewBox="0 0 15 14"><path d="M7.75 0L12 4.4L4.4 12L0 7.2Z" fill="#d8457f"/><rect x="6" y="7.4" width="7.4" height="5.8" rx="0.8" fill="#f0f0f0" stroke="#222" stroke-width="0.9"/><path d="M7.8 7.4V6A1.9 1.9 0 0 1 11.6 6V7.4" fill="none" stroke="#f0f0f0" stroke-width="1.2"/><rect x="9.1" y="9.2" width="1.3" height="2.2" fill="#222"/></svg>
<svg class="b" style="left:1141.6px;top:50.5px;" width="8" height="13" viewBox="0 0 8 13"><path d="M6.8 0.8L1.2 6.5L6.8 12.2" fill="none" stroke="#f0c020" stroke-width="1.4"/></svg>
<svg class="b" style="left:1164.6px;top:50.5px;" width="8" height="13" viewBox="0 0 8 13"><path d="M1.2 0.8L6.8 6.5L1.2 12.2" fill="none" stroke="#8a8a8a" stroke-width="1.4"/></svg>
<svg class="b" style="left:1188px;top:50px;" width="13" height="14" viewBox="0 0 13 14"><rect x="0" y="6" width="8" height="7" fill="#8c8c8c"/><rect x="3" y="8.2" width="2.2" height="2.6" fill="#222"/><path d="M6.9 6V3.9A2.4 2.4 0 0 1 11.7 3.9V5.6" fill="none" stroke="#8c8c8c" stroke-width="1.2"/></svg>
<svg class="b" style="left:1212px;top:50px;" width="11" height="14" viewBox="0 0 11 14"><path d="M0.5 0.5H7.5L10.5 3.5V13.5H0.5Z" fill="#f8f8f8" stroke="#d8d8d8" stroke-width="0.6"/><path d="M7.5 0.5V3.5H10.5" fill="#d8e0e8" stroke="#c0c8d0" stroke-width="0.5"/><text x="5" y="10.3" font-family="Liberation Sans" font-weight="bold" font-size="6" fill="#3c8fb8" text-anchor="middle" letter-spacing="-0.5">C+</text></svg>
<span class="t" style="left:1233.3px;top:50px;font-size:12px;color:#e6e6e6;letter-spacing:-0.837px;">samplecode.cc</span>
<svg class="b" style="left:1399.3px;top:50.1px;" width="8" height="14" viewBox="0 0 8 14"><path d="M0.3 5.4L4 1L7.7 5.4Z M0.3 7.3L4 11.8L7.7 7.3Z" fill="#e0e0e0"/></svg>
<div class="b" style="left:1412px;top:49px;width:1px;height:16px;background:#555;"></div>
<svg class="b" style="left:1419.2px;top:52px;" width="10" height="10" viewBox="0 0 10 10"><path d="M0.7 0.7L9.3 9.3M9.3 0.7L0.7 9.3" stroke="#e0e0e0" stroke-width="1.2"/></svg>
<div class="b" style="left:1436px;top:49px;width:1px;height:16px;background:#555;"></div>
<span class="t" style="left:1462px;top:50px;font-size:12px;color:#e6e6e6;letter-spacing:-0.167px;">main(int, char **) -&gt; int</span>
<svg class="b" style="left:1761.3px;top:50.1px;" width="8" height="14" viewBox="0 0 8 14"><path d="M0.3 5.4L4 1L7.7 5.4Z M0.3 7.3L4 11.8L7.7 7.3Z" fill="#e0e0e0"/></svg>
<div class="b" style="left:1774px;top:49px;width:1px;height:16px;background:#555;"></div>
<span class="t" style="left:1778px;top:50px;font-size:12px;color:#e6e6e6;letter-spacing:-0.468px;">Line: 60, Col: 1</span>
<svg class="b" style="left:1878px;top:51px;" width="16" height="13" viewBox="0 0 16 13"><rect x="0.2" y="1.4" width="7.8" height="10.2" fill="none" stroke="#e0e0e0" stroke-width="1.2"/><path d="M0.2 6.5H8" stroke="#e0e0e0" stroke-width="1.2"/><path d="M9.2 6.7H14M11.6 4.2V9.2" stroke="#e0e0e0" stroke-width="1.2"/></svg>
<svg class="b" style="left:1903px;top:51.5px;" width="10" height="12" viewBox="0 0 10 12"><rect x="0.6" y="0.9" width="8.6" height="10.2" fill="none" stroke="#e0e0e0" stroke-width="1.2"/><rect x="0.4" y="0.9" width="2.8" height="10.2" fill="#e0e0e0"/><path d="M4.4 3.6V8.4L7 6Z" fill="#e0e0e0"/></svg>
<svg class="b" style="left:1446px;top:51px;" width="13" height="14" viewBox="0 0 13 14"><path d="M7.75 0L12 4.4L4.4 12L0 7.2Z" fill="#d8457f"/></svg>
<div class="b" style="left:71px;top:1014px;width:1849px;height:26px;background:#222222;"></div>
<div class="b" style="left:73px;top:1017px;width:24px;height:21px;background:#235c99;"></div>
<svg class="b" style="left:78.8px;top:1022px;" width="12" height="12" viewBox="0 0 12 12"><rect x="0" y="0" width="11.3" height="11.3" fill="#ececec"/><rect x="5.4" y="1.3" width="4.6" height="8.7" fill="#235c99"/><rect x="0.9" y="1" width="3.6" height="9.3" fill="#dedede"/></svg>
<div class="b" style="left:103px;top:1017px;width:200px;height:21px;background:#303030;"></div>
<svg class="b" style="left:108px;top:1020px;" width="17" height="15" viewBox="0 0 17 15"><circle cx="9.5" cy="5.5" r="4" fill="none" stroke="#9a9a9a" stroke-width="1.5"/><path d="M6.6 8.6L1.5 13.5" stroke="#9a9a9a" stroke-width="1.8"/><path d="M11.5 12H16L13.75 14.3Z" fill="#9a9a9a"/></svg>
<span class="t" style="left:130.4px;top:1020px;font-size:12px;color:#8c8c8c;letter-spacing:-0.069px;">Type to locate (Ctrl+K)</span>
<div class="b" style="left:306px;top:1017px;width:1px;height:21px;background:#4a4a4a;"></div>
<span class="t" style="left:316.5px;top:1020px;font-size:12px;color:#e6e6e6;">1</span>
<span class="t" style="left:329.5px;top:1020px;font-size:12px;color:#e6e6e6;letter-spacing:-0.736px;">Issues</span>
<span class="t" style="left:395px;top:1020px;font-size:12px;color:#e6e6e6;">2</span>
<span class="t" style="left:408.5px;top:1020px;font-size:12px;color:#e6e6e6;letter-spacing:-0.798px;">Search Results</span>
<span class="t" style="left:497px;top:1020px;font-size:12px;color:#e6e6e6;">3</span>
<span class="t" style="left:510.5px;top:1020px;font-size:12px;color:#e6e6e6;letter-spacing:-0.533px;">Application Output</span>
<span class="t" style="left:617px;top:1020px;font-size:12px;color:#e6e6e6;">4</span>
<span class="t" style="left:630.5px;top:1020px;font-size:12px;color:#e6e6e6;letter-spacing:-0.721px;">Compile Output</span>
<span class="t" style="left:722px;top:1020px;font-size:12px;color:#e6e6e6;">5</span>
<span class="t" style="left:735.5px;top:1020px;font-size:12px;color:#e6e6e6;letter-spacing:-0.893px;">QML Debugger Console</span>
<span class="t" style="left:864.5px;top:1020px;font-size:12px;color:#e6e6e6;">6</span>
<span class="t" style="left:878.5px;top:1020px;font-size:12px;color:#e6e6e6;letter-spacing:-0.914px;">General Messages</span>
<span class="t" style="left:983px;top:1020px;font-size:12px;color:#e6e6e6;">7</span>
<span class="t" style="left:996.5px;top:1020px;font-size:12px;color:#e6e6e6;letter-spacing:-0.682px;">Version Control</span>
<span class="t" style="left:1086.5px;top:1020px;font-size:12px;color:#e6e6e6;">8</span>
<span class="t" style="left:1100px;top:1020px;font-size:12px;color:#e6e6e6;letter-spacing:-0.532px;">Test Results</span>
<div class="b" style="left:363px;top:1021px;width:15.5px;height:13px;background:#2b6fb8;border-radius:6.5px;"></div>
<span class="t" style="left:367.3px;top:1020px;font-size:11.5px;color:#fff;font-weight:bold;">3</span>
<svg class="b" style="left:1178.5px;top:1020.6px;" width="8" height="14" viewBox="0 0 8 14"><path d="M0.3 5.4L4 1L7.7 5.4Z M0.3 7.3L4 11.8L7.7 7.3Z" fill="#e0e0e0"/></svg>
<svg class="b" style="left:1869px;top:1019px;" width="17" height="14" viewBox="0 0 17 14"><rect x="1.4" y="8.3" width="13.2" height="3.4" rx="1.7" fill="#1a1a1a" stroke="#ececec" stroke-width="1.2"/><rect x="2.6" y="9.2" width="7.4" height="1.7" fill="#8a8a8a"/><path d="M9.8 4.4H15.4L12.6 1.2Z" fill="#ececec"/></svg>
<svg class="b" style="left:1902px;top:1022px;" width="12" height="12" viewBox="0 0 12 12"><rect x="0" y="0" width="11.2" height="11.2" fill="#ececec"/><rect x="1.3" y="1.3" width="4.7" height="8.6" fill="#222"/><rect x="6.8" y="1" width="3.6" height="9.2" fill="#dedede"/></svg>
</body></html>
